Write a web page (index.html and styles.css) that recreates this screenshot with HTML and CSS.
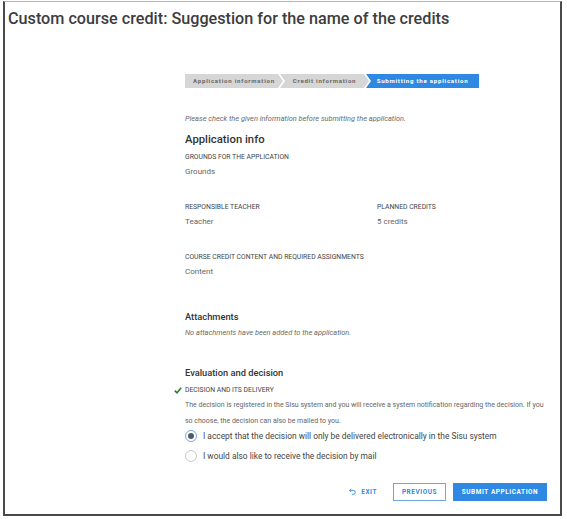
FILE: index.html
```html
<!DOCTYPE html>
<html lang="en">
<head>
<meta charset="utf-8">
<title>Custom course credit</title>
<link rel="stylesheet" href="styles.css">
</head>
<body>
<div class="frame">
  <h1 class="title">Custom course credit: Suggestion for the name of the credits</h1>
  <div class="content">
    <ol class="stepper">
      <li class="step step-first">Application information</li>
      <li class="step step-mid">Credit information</li>
      <li class="step step-last active">Submitting the application</li>
    </ol>
    <p class="hint">Please check the given information before submitting the application.</p>

    <h2 class="h-main">Application info</h2>
    <div class="label l-first">GROUNDS FOR THE APPLICATION</div>
    <div class="value">Grounds</div>

    <div class="grid2">
      <div>
        <div class="label">RESPONSIBLE TEACHER</div>
        <div class="value">Teacher</div>
      </div>
      <div>
        <div class="label">PLANNED CREDITS</div>
        <div class="value">5 credits</div>
      </div>
    </div>

    <div class="label l-group">COURSE CREDIT CONTENT AND REQUIRED ASSIGNMENTS</div>
    <div class="value">Content</div>

    <h3 class="h-sub h-attach">Attachments</h3>
    <p class="hint hint-attach">No attachments have been added to the application.</p>

    <h3 class="h-sub h-eval">Evaluation and decision</h3>
    <div class="label label-check">
      <svg class="check" width="8" height="7" viewBox="0 0 8 7"><polyline points="0.8,3.6 3,5.8 7.2,0.8" fill="none" stroke="#2e7d32" stroke-width="1.6"/></svg>
      DECISION AND ITS DELIVERY
    </div>
    <p class="desc">The decision is registered in the Sisu system and you will receive a system notification regarding the decision. If you so choose, the decision can also be mailed to you.</p>

    <div class="radios">
      <label class="radio"><span class="circle checked"></span><span>I accept that the decision will only be delivered electronically in the Sisu system</span></label>
      <label class="radio"><span class="circle"></span><span>I would also like to receive the decision by mail</span></label>
    </div>

    <div class="actions">
      <a class="exit"><svg width="7" height="7" viewBox="0 0 7 7"><path d="M2.2 0.8 L0.6 2.4 L2.2 4 M0.6 2.4 H4.3 A2 2 0 0 1 4.3 6.4 H3" fill="none" stroke="#2f89e2" stroke-width="0.9"/></svg>EXIT</a>
      <button class="btn btn-outline">PREVIOUS</button>
      <button class="btn btn-primary">SUBMIT APPLICATION</button>
    </div>
  </div>
</div>
</body>
</html>
```
FILE: styles.css
```css
* { box-sizing: border-box; }
html, body { margin: 0; padding: 0; background: #fff; }
body { font-family: Roboto, "Noto Sans", sans-serif; color: #333; }

.frame {
  margin: 1px 0 0 3px;
  width: 559px;
  height: 515px;
  border: 2px solid #4a4a4a;
  border-top: 1px solid #b5b5b5;
}

.title {
  margin: 0;
  padding: 5px 0 0 3px;
  font-size: 16.2px;
  line-height: 24px;
  font-weight: 500;
  color: #3d3d3d;
}

.content {
  margin-left: 180px;
  width: 362px;
}

.stepper {
  list-style: none;
  margin: 43px 0 0 0;
  padding: 0;
  display: flex;
  height: 14px;
}
.step {
  height: 14px;
  line-height: 14px;
  font-size: 6.1px;
  font-weight: 700;
  letter-spacing: 0.75px;
  color: #666;
  background: #d6d6d6;
  text-align: center;
  white-space: nowrap;
}
.step-first {
  width: 98px;
  clip-path: polygon(0 0, calc(100% - 5px) 0, 100% 50%, calc(100% - 5px) 100%, 0 100%);
}
.step-mid {
  width: 89px;
  margin-left: -3px;
  clip-path: polygon(0 0, calc(100% - 5px) 0, 100% 50%, calc(100% - 5px) 100%, 0 100%, 5px 50%);
}
.step-last {
  width: 113px;
  margin-left: -3px;
  clip-path: polygon(0 0, 100% 0, 100% 100%, 0 100%, 5px 50%);
}
.step.active { background: #2f89e2; color: #fff; }

.hint {
  margin: 26px 0 0 0;
  font-size: 7.4px;
  line-height: 10px;
  font-style: italic;
  color: #6a6a6a;
}

.h-main {
  margin: 8px 0 0 0;
  font-size: 11.3px;
  line-height: 16px;
  font-weight: 500;
  color: #333;
}

.label {
  font-size: 6.8px;
  line-height: 10px;
  color: #444;
}
.l-first { margin-top: 3.5px; }
.l-group { margin-top: 24px; }

.value {
  margin-top: 4px;
  font-size: 8px;
  line-height: 12px;
  color: #666;
}

.grid2 {
  display: grid;
  grid-template-columns: 192px 1fr;
  margin-top: 24px;
}

.h-sub {
  margin: 0;
  font-size: 9.3px;
  line-height: 14px;
  font-weight: 500;
  color: #333;
}
.h-attach { margin-top: 32px; }
.hint-attach { margin-top: 4px; }
.h-eval { margin-top: 28px; }

.label-check {
  margin-top: 5px;
  position: relative;
}
.check {
  position: absolute;
  left: -11px;
  top: 2px;
}

.desc {
  margin: 2px 0 0 0;
  font-size: 7px;
  line-height: 16px;
  color: #666;
}

.radios {
  margin-top: 0;
  display: flex;
  flex-direction: column;
  gap: 6px;
}
.radio {
  display: flex;
  align-items: center;
  gap: 6px;
  height: 14px;
  font-size: 8.4px;
  color: #444;
  white-space: nowrap;
}
.circle {
  width: 12px;
  height: 12px;
  border-radius: 50%;
  border: 1px solid #c9c9c9;
  display: flex;
  align-items: center;
  justify-content: center;
  flex: none;
}
.circle.checked { border-color: #7ea8da; }
.circle.checked::after {
  content: "";
  width: 6px;
  height: 6px;
  border-radius: 50%;
  background: #4f5b68;
}

.actions {
  margin-top: 20px;
  display: flex;
  justify-content: flex-end;
  align-items: center;
  height: 18px;
}
.exit {
  display: flex;
  align-items: center;
  gap: 5px;
  font-size: 6.4px;
  font-weight: 700;
  letter-spacing: 0.6px;
  color: #2f89e2;
  margin-right: 16px;
}
.btn {
  height: 18px;
  font-family: inherit;
  font-size: 6.4px;
  font-weight: 700;
  letter-spacing: 0.6px;
  padding: 0;
  border-radius: 0;
}
.btn-outline {
  width: 53px;
  background: #fff;
  border: 1px solid #6fa6e0;
  color: #2f89e2;
  margin-right: 7px;
}
.btn-primary {
  width: 94px;
  background: #2f89e2;
  border: 1px solid #2f89e2;
  color: #fff;
}
```
